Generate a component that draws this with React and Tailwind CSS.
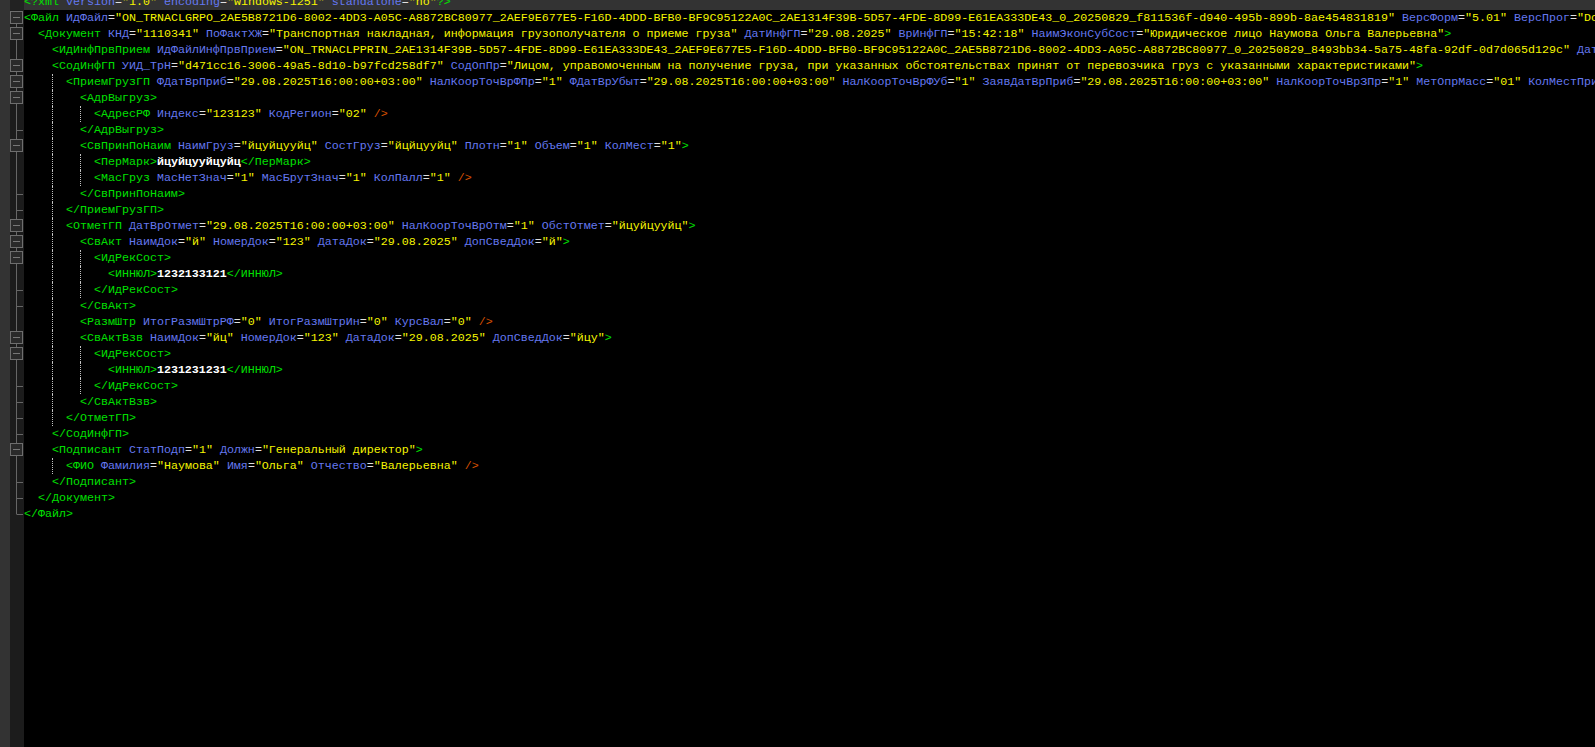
// XML editor view: each row is [fold marker, guide columns, indent, text]
const G = "text-[#00e000]";
const B = "text-[#6478f0]";
const Y = "text-[#f5f500]";
const W = "text-[#e0e0e0]";

// turns `<Tag a="b" />` source into coloured tokens
function tokenize(src) {
  const out = [];
  const re = /(<\/?[^\s>]+|\/>|\?>|>)|(\s+)|([^\s=<>"]+)(?==|$)|(=)|("[^"]*"?)|([^<]+)/g;
  let m;
  while ((m = re.exec(src))) {
    if (m[1]) out.push([m[1] === "/>" ? "text-[#d85000]" : G, m[1]]);
    else if (m[2]) out.push(["", m[2]]);
    else if (m[3]) out.push([B, m[3]]);
    else if (m[4]) out.push([W, m[4]]);
    else if (m[5]) out.push([Y, m[5]]);
    else if (m[6]) out.push(["text-white font-bold", m[6]]);
  }
  return out;
}

const rows = [
  ["none", [], 0, '<?xml version="1.0" encoding="windows-1251" standalone="no"?>'],
  ["first", [], 0, '<Файл ИдФайл="ON_TRNACLGRPO_2AE5B8721D6-8002-4DD3-A05C-A8872BC80977_2AEF9E677E5-F16D-4DDD-BFB0-BF9C95122A0C_2AE1314F39B-5D57-4FDE-8D99-E61EA333DE43_0_20250829_f811536f-d940-495b-899b-8ae454831819" ВерсФорм="5.01" ВерсПрог="Do'],
  ["box", [], 2, '<Документ КНД="1110341" ПоФактХЖ="Транспортная накладная, информация грузополучателя о приеме груза" ДатИнфГП="29.08.2025" ВрИнфГП="15:42:18" НаимЭконСубСост="Юридическое лицо Наумова Ольга Валерьевна">'],
  ["line", [], 4, '<ИдИнфПрвПрием ИдФайлИнфПрвПрием="ON_TRNACLPPRIN_2AE1314F39B-5D57-4FDE-8D99-E61EA333DE43_2AEF9E677E5-F16D-4DDD-BFB0-BF9C95122A0C_2AE5B8721D6-8002-4DD3-A05C-A8872BC80977_0_20250829_8493bb34-5a75-48fa-92df-0d7d065d129c" Дат'],
  ["box", [], 4, '<СодИнфГП УИД_ТрН="d471cc16-3006-49a5-8d10-b97fcd258df7" СодОпПр="Лицом, управомоченным на получение груза, при указанных обстоятельствах принят от перевозчика груз с указанными характеристиками">'],
  ["box", [4], 6, '<ПриемГрузГП ФДатВрПриб="29.08.2025T16:00:00+03:00" НалКоорТочВрФПр="1" ФДатВрУбыт="29.08.2025T16:00:00+03:00" НалКоорТочВрФУб="1" ЗаявДатВрПриб="29.08.2025T16:00:00+03:00" НалКоорТочВрЗПр="1" МетОпрМасс="01" КолМестПри'],
  ["box", [4], 8, "<АдрВыгруз>"],
  ["line", [4, 8], 10, '<АдресРФ Индекс="123123" КодРегион="02" />'],
  ["tick", [4], 8, "</АдрВыгруз>"],
  ["box", [4], 8, '<СвПринПоНаим НаимГруз="йцуйцууйц" СостГруз="йцйцууйц" Плотн="1" Объем="1" КолМест="1">'],
  ["line", [4, 8], 10, "<ПерМарк>йцуйцууйцуйц</ПерМарк>"],
  ["line", [4, 8], 10, '<МасГруз МасНетЗнач="1" МасБрутЗнач="1" КолПалл="1" />'],
  ["tick", [4], 8, "</СвПринПоНаим>"],
  ["tick", [4], 6, "</ПриемГрузГП>"],
  ["box", [4], 6, '<ОтметГП ДатВрОтмет="29.08.2025T16:00:00+03:00" НалКоорТочВрОтм="1" ОбстОтмет="йцуйцууйц">'],
  ["box", [4], 8, '<СвАкт НаимДок="й" НомерДок="123" ДатаДок="29.08.2025" ДопСведДок="й">'],
  ["box", [4, 8], 10, "<ИдРекСост>"],
  ["line", [4, 8], 12, "<ИННЮЛ>1232133121</ИННЮЛ>"],
  ["tick", [4, 8], 10, "</ИдРекСост>"],
  ["tick", [4], 8, "</СвАкт>"],
  ["line", [4], 8, '<РазмШтр ИтогРазмШтрРФ="0" ИтогРазмШтрИн="0" КурсВал="0" />'],
  ["box", [4], 8, '<СвАктВзв НаимДок="йц" НомерДок="123" ДатаДок="29.08.2025" ДопСведДок="йцу">'],
  ["box", [4, 8], 10, "<ИдРекСост>"],
  ["line", [4, 8], 12, "<ИННЮЛ>1231231231</ИННЮЛ>"],
  ["tick", [4, 8], 10, "</ИдРекСост>"],
  ["tick", [4], 8, "</СвАктВзв>"],
  ["tick", [4], 6, "</ОтметГП>"],
  ["tick", [], 4, "</СодИнфГП>"],
  ["box", [], 4, '<Подписант СтатПодп="1" Должн="Генеральный директор">'],
  ["line", [4], 6, '<ФИО Фамилия="Наумова" Имя="Ольга" Отчество="Валерьевна" />'],
  ["tick", [], 4, "</Подписант>"],
  ["tick", [], 2, "</Документ>"],
  ["end", [], 0, "</Файл>"],
];

function FoldMark({ kind }) {
  if (kind === "none") return null;
  const boxed = kind === "first" || kind === "box";
  return (
    <svg width="14" height="16" viewBox="0 0 14 16" className="block">
      {kind !== "first" && <path d={kind === "end" ? "M6.5 0V8" : "M6.5 0V16"} stroke="#666" fill="none" />}
      {boxed && (
        <>
          <path d="M6.5 13V16" stroke="#666" fill="none" />
          <rect x="0.5" y="1.5" width="12" height="12" fill="#2a2a2a" stroke="#6e6e6e" />
          <path d="M3 7.5H10" stroke="#777" fill="none" />
        </>
      )}
      {(kind === "tick" || kind === "end") && <path d="M6.5 8.5H13" stroke="#666" fill="none" />}
    </svg>
  );
}

function Row({ row }) {
  const [kind, guides, indent, src] = row;
  const cells = [];
  for (let i = 0; i < indent; i += 2) {
    cells.push(
      <span
        key={i}
        className={guides.includes(i) ? "w-[2ch] h-4 shrink-0 border-l border-dotted border-[#c0c0c0]" : "w-[2ch] h-4 shrink-0"}
      />
    );
  }
  return (
    <div className={kind === "none" ? "flex h-4 shrink-0 bg-[#333333]" : "flex h-4 shrink-0"}>
      <div className={kind === "none" ? "w-[14px] shrink-0 bg-[#222222]" : "w-[14px] shrink-0 bg-[#1c1c1c]"}>
        <FoldMark kind={kind} />
      </div>
      <div className="flex-1 min-w-0 flex items-center whitespace-pre leading-4 overflow-hidden">
        {cells}
        <span>
          {tokenize(src).map(([cls, text], i) => (
            <span key={i} className={cls}>{text}</span>
          ))}
        </span>
      </div>
    </div>
  );
}

export default function App() {
  return (
    <div className="h-[747px] w-[1595px] flex bg-black overflow-hidden font-['Liberation_Mono',monospace] text-[11.67px]">
      <div className="w-[10px] shrink-0 bg-[#333333]" />
      <div className="flex-1 min-w-0 -mt-[6px] flex flex-col">
        {rows.map((row, i) => (
          <Row key={i} row={row} />
        ))}
        <div className="flex-1 w-[14px] bg-[#1c1c1c]" />
      </div>
    </div>
  );
}
